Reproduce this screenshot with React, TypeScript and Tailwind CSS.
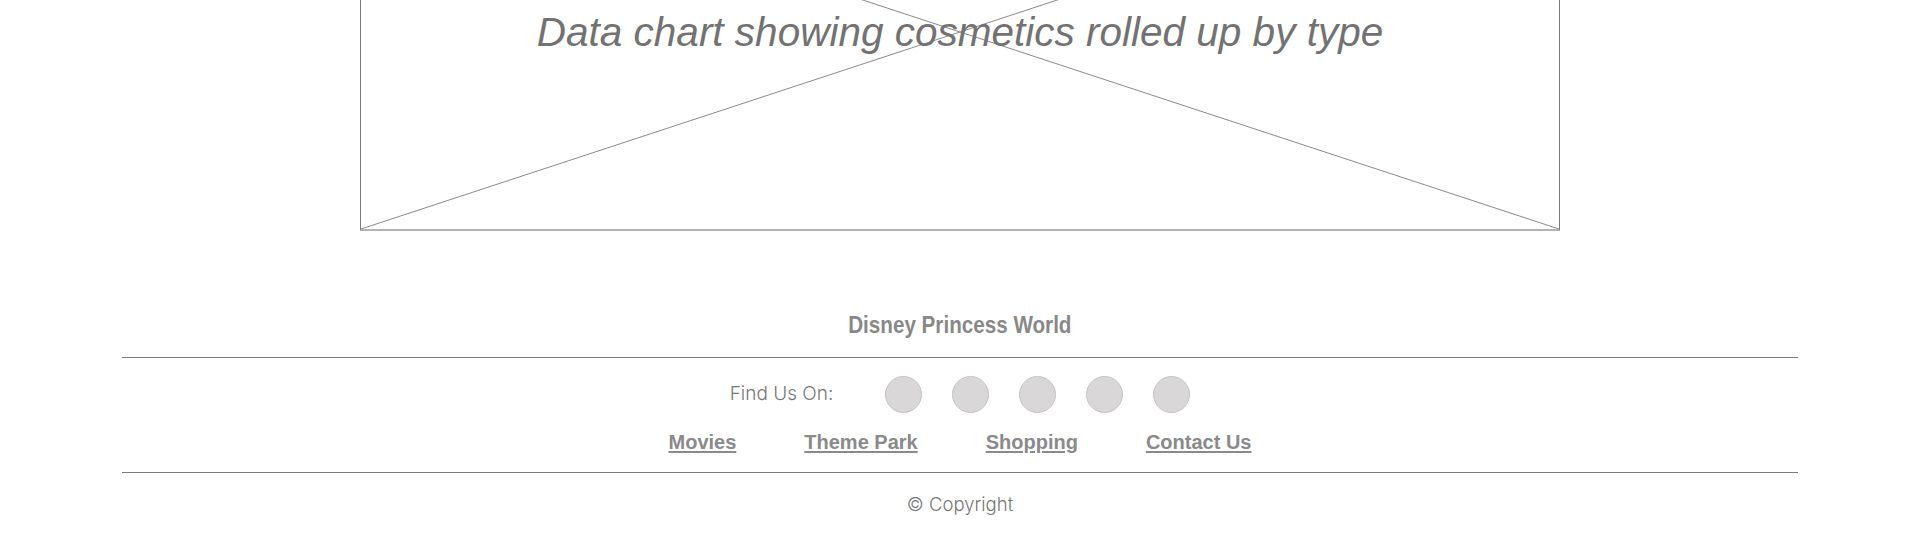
import React from 'react';

const links = ['Movies', 'Theme Park', 'Shopping', 'Contact Us'];

const App: React.FC = () => {
  return (
    <div className="w-full h-[540px] overflow-hidden bg-white font-['Liberation_Sans',Arial,sans-serif]">
      {/* Chart placeholder (page is scrolled, top of box is off screen) */}
      <div className="relative mx-auto -mt-[165px] flex h-[396px] w-[1200px] items-center justify-center border-x border-b-2 border-x-[#7a7a7a] border-b-[#b3b3b3]">
        <svg className="absolute inset-0 h-full w-full" preserveAspectRatio="none" viewBox="0 0 100 100">
          <line x1="0" y1="0" x2="100" y2="100" stroke="#8a8a8a" strokeWidth="1" vectorEffect="non-scaling-stroke" />
          <line x1="100" y1="0" x2="0" y2="100" stroke="#8a8a8a" strokeWidth="1" vectorEffect="non-scaling-stroke" />
        </svg>
        <p className="relative text-[40.5px] italic leading-none text-[#727272]">
          Data chart showing cosmetics rolled up by type
        </p>
      </div>

      {/* Footer */}
      <footer className="mx-[122px] mt-[79px]">
        <div className="flex h-[30px] items-center justify-center">
          <h2 className="inline-block scale-x-[0.86] text-[24px] font-bold leading-[30px] text-[#888888]">
            Disney Princess World
          </h2>
        </div>
        <div className="mt-[17px] h-px bg-[#7a7a7a]" />

        <div className="mt-[18px] flex items-center justify-center">
          <span className="mr-[52px] font-['Inter',sans-serif] text-[19px] font-light text-[#777777]">Find Us On:</span>
          <div className="flex gap-[30px]">
            {[0, 1, 2, 3, 4].map(i => (
              <span key={i} className="block h-[37px] w-[37px] rounded-full border border-[#c4c4c4] bg-[#d9d7d8]" />
            ))}
          </div>
        </div>

        <nav className="mt-[17px] flex h-[24px] items-center justify-center gap-[68px]">
          {links.map(link => (
            <a key={link} href="#" className="text-[20px] font-bold leading-[24px] text-[#8a8a8a] underline underline-offset-2">
              {link}
            </a>
          ))}
        </nav>
        <div className="mt-[18px] h-px bg-[#7a7a7a]" />

        <p className="mt-[19px] text-center font-['Inter',sans-serif] text-[18.5px] font-light leading-[24px] text-[#777777]">
          © Copyright
        </p>
      </footer>
    </div>
  );
};

export default App;
